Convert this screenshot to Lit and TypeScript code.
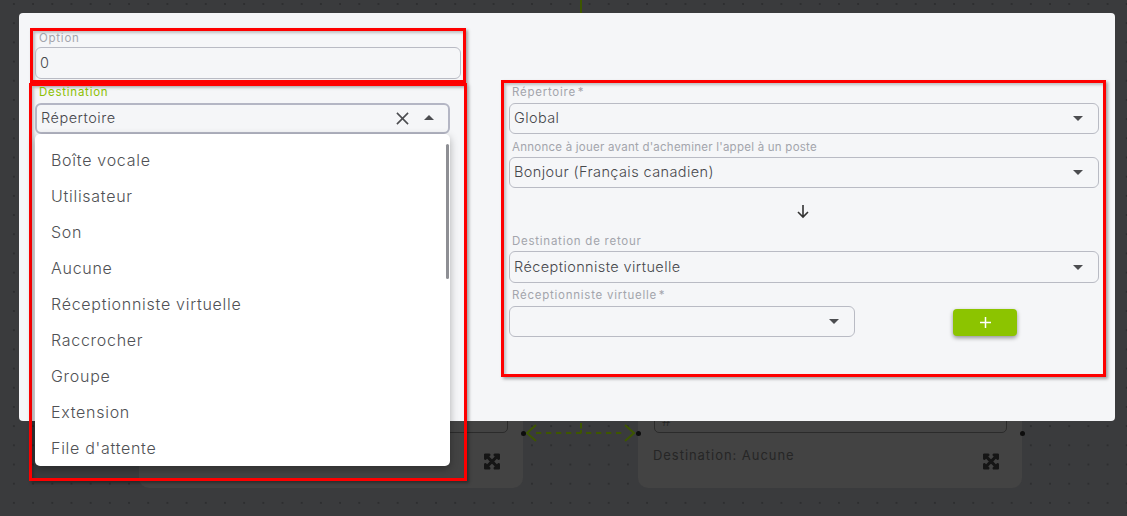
import { LitElement, html, css, svg } from 'lit';
import { customElement } from 'lit/decorators.js';

const expandPath =
  'M448 344v112a23.94 23.94 0 0 1-24 24H312c-21.39 0-32.09-25.9-17-41l36.2-36.2L224 295.6 116.77 402.9 153 439c15.09 15.1 4.39 41-17 41H24a23.94 23.94 0 0 1-24-24V344c0-21.4 25.89-32.1 41-17l36.19 36.2L184.46 256 77.18 148.7 41 185c-15.1 15.1-41 4.4-41-17V56a23.94 23.94 0 0 1 24-24h112c21.39 0 32.09 25.9 17 41l-36.2 36.2L224 216.4l107.23-107.3L295 73c-15.09-15.1-4.39-41 17-41h112a23.94 23.94 0 0 1 24 24v112c0 21.4-25.89 32.1-41 17l-36.19-36.2L263.54 256l107.28 107.3L407 327.1c15.1-15.2 41-4.5 41 16.9z';

const menuItems = [
  'Boîte vocale',
  'Utilisateur',
  'Son',
  'Aucune',
  'Réceptionniste virtuelle',
  'Raccrocher',
  'Groupe',
  'Extension',
  "File d'attente",
];

@customElement('app-root')
export class AppRoot extends LitElement {
  static styles = css`
    :host {
      display: block;
      position: relative;
      width: 1127px;
      height: 516px;
      overflow: hidden;
      font-family: Inter, 'Noto Sans', sans-serif;
      font-weight: 300;
      background-color: #3a3b3d;
      background-image: radial-gradient(circle at center, #1e1f20 0, #1e1f20 0.4px, transparent 0.9px);
      background-size: 19.2px 19.2px;
      background-position: 4.3px -5.6px;
    }

    .wires {
      position: absolute;
      inset: 0;
    }

    .node {
      position: absolute;
      top: 300px;
      width: 384px;
      height: 188px;
      background: #434343;
      border-radius: 10px;
    }
    .node.a { left: 139px; }
    .node.b { left: 638px; }

    .node-input {
      position: absolute;
      left: 16px;
      right: 15px;
      top: 60px;
      height: 73px;
      box-sizing: border-box;
      padding: 0 0 3px 7px;
      display: flex;
      align-items: flex-end;
      border: 1px solid #2b2b2b;
      border-radius: 5px;
      font-size: 14px;
      line-height: 16px;
      color: #262626;
    }

    .node-text {
      position: absolute;
      left: 15px;
      top: 147px;
      font-size: 13px;
      font-weight: 400;
      letter-spacing: 0.95px;
      color: #262626;
    }

    .node-icon {
      position: absolute;
      right: 23px;
      top: 153px;
      width: 16px;
      height: 17px;
      fill: #161616;
      stroke: #161616;
      stroke-width: 36;
    }

    .dot {
      position: absolute;
      width: 5px;
      height: 5px;
      border-radius: 50%;
      background: #0d0d0d;
    }

    .modal {
      position: absolute;
      left: 19px;
      top: 13px;
      width: 1096px;
      height: 408px;
      box-sizing: border-box;
      padding: 15px 0 0 11px;
      display: flex;
      align-items: flex-start;
      background: #f5f6f8;
      border-radius: 4px;
    }

    .left {
      display: flex;
      flex-direction: column;
      width: 436px;
    }

    .mark {
      box-sizing: border-box;
      border: 3px solid #fe0000;
      box-shadow: 2px 2px 3px rgba(0, 0, 0, 0.35), inset 2px 2px 3px rgba(0, 0, 0, 0.22);
    }

    .mark-option {
      height: 55px;
      padding-left: 2px;
    }

    .mark-destination {
      position: relative;
      width: 438px;
      height: 398px;
      margin-left: -1px;
      padding-left: 3px;
    }

    .mark-right {
      width: 605px;
      height: 297px;
      margin: 52px 0 0 35px;
      padding-left: 5px;
    }

    .label {
      display: block;
      margin-left: 3px;
      font-size: 11.5px;
      font-weight: 400;
      line-height: 16px;
      letter-spacing: 0.75px;
      color: #a3a5ac;
      white-space: nowrap;
    }
    .label.tight-12 { line-height: 14px; margin-left: 4px; padding-bottom: 2px; }
    .label.tight-10 { line-height: 12px; margin-left: 4px; padding-bottom: 5px; color: #8cc000; }
    .label.first { padding: 1px 0 3px; }
    .label.second { padding: 5px 0 2px; letter-spacing: 0.24px; }
    .label.third { padding-bottom: 2px; }
    .label.fourth { padding: 4px 0 3px; }

    .field {
      box-sizing: border-box;
      display: flex;
      align-items: center;
      width: 590px;
      height: 31px;
      padding: 0 15px 2px 4px;
      border: 1px solid #b9bbc4;
      border-radius: 6px;
      font-size: 14.5px;
      letter-spacing: 0.4px;
      color: #47484c;
    }
    .field.tall { height: 32px; }
    .field.short { width: 346px; }
    .field.option { width: 426px; height: 32px; }
    .field.open {
      width: 415px;
      height: 31px;
      border: 2px solid #b4b6c4;
      padding: 0 14px 2px 4px;
      letter-spacing: 0.5px;
    }

    .value { flex: 1; white-space: nowrap; }

    .caret {
      width: 0;
      height: 0;
      margin-top: 2px;
      border-left: 5.5px solid transparent;
      border-right: 5.5px solid transparent;
      border-top: 5.5px solid #4c4d50;
    }
    .caret.up {
      margin-top: 0;
      border-top: 0;
      border-bottom: 5.5px solid #4c4d50;
    }

    .clear {
      width: 13px;
      height: 13px;
      margin: 1px 15px 0 0;
      stroke: #4c4d50;
      stroke-width: 1.7;
      fill: none;
    }

    .menu {
      position: absolute;
      left: 3px;
      top: 48px;
      width: 415px;
      height: 332px;
      padding-top: 8px;
      box-sizing: border-box;
      overflow: hidden;
      background: #fff;
      border-radius: 5px;
      box-shadow: 0 3px 8px rgba(0, 0, 0, 0.3);
    }

    .item {
      height: 36px;
      line-height: 36px;
      padding-left: 16px;
      font-size: 16px;
      letter-spacing: 0.72px;
      color: #505155;
    }

    .scrollbar {
      position: absolute;
      right: 1px;
      top: 10px;
      width: 3px;
      height: 135px;
      background: #8e8f94;
      border-radius: 2px;
    }

    .down {
      display: flex;
      justify-content: center;
      align-items: center;
      width: 588px;
      height: 45px;
    }
    .down svg {
      width: 16px;
      height: 16px;
      stroke: #333;
      stroke-width: 1.6;
      fill: none;
    }

    .row {
      display: flex;
      align-items: flex-start;
    }

    .add {
      display: flex;
      align-items: center;
      justify-content: center;
      width: 64px;
      height: 27px;
      margin: 3px 0 0 98px;
      padding: 0;
      border: 0;
      border-radius: 4px;
      background: #8cc400;
      box-shadow: 0 2px 4px rgba(0, 0, 0, 0.4);
    }
    .add svg {
      width: 11px;
      height: 11px;
      stroke: #fff;
      stroke-width: 1.5;
    }
  `;

  private node(cls: string, text: string) {
    return html`
      <div class="node ${cls}">
        <div class="node-input">#</div>
        ${text ? html`<div class="node-text">${text}</div>` : ''}
        <svg class="node-icon" viewBox="0 0 448 512"><path d="${expandPath}"></path></svg>
      </div>
    `;
  }

  private caret(up = false) {
    return html`<span class="caret ${up ? 'up' : ''}"></span>`;
  }

  private select(value: string, cls = '') {
    return html`
      <div class="field ${cls}">
        <span class="value">${value}</span>
        ${this.caret()}
      </div>
    `;
  }

  render() {
    return html`
      ${this.node('a', '')}
      ${this.node('b', 'Destination: Aucune')}

      <svg class="wires" width="1127" height="516" fill="none" stroke="#3d5600" stroke-width="2">
        ${svg`
          <path d="M581 0V13"></path>
          <path d="M581 423V428.5M581 430V433"></path>
          <path d="M536 433H625" stroke-dasharray="5.3 4.7"></path>
          <path d="M536 425L527 433L536 441"></path>
          <path d="M625 425L634 433L625 441"></path>
        `}
      </svg>
      <span class="dot" style="left:521px;top:431px"></span>
      <span class="dot" style="left:636px;top:431px"></span>
      <span class="dot" style="left:1020px;top:431px"></span>

      <div class="modal">
        <div class="left">
          <div class="mark mark-option">
            <span class="label tight-12">Option</span>
            <div class="field option"><span class="value">0</span></div>
          </div>
          <div class="mark mark-destination">
            <span class="label tight-10">Destination</span>
            <div class="field open">
              <span class="value">Répertoire</span>
              <svg class="clear" viewBox="0 0 14 14"><path d="M1 1L13 13M13 1L1 13"></path></svg>
              ${this.caret(true)}
            </div>
            <div class="menu">
              ${menuItems.map((item) => html`<div class="item">${item}</div>`)}
              <div class="scrollbar"></div>
            </div>
          </div>
        </div>

        <div class="mark mark-right">
          <span class="label first">Répertoire&#8202;*</span>
          ${this.select('Global')}
          <span class="label second">Annonce à jouer avant d'acheminer l'appel à un poste</span>
          ${this.select('Bonjour (Français canadien)')}
          <div class="down">
            <svg viewBox="0 0 16 16"><path d="M8 2V14M3 9L8 14L13 9"></path></svg>
          </div>
          <span class="label third">Destination de retour</span>
          ${this.select('Réceptionniste virtuelle', 'tall')}
          <span class="label fourth">Réceptionniste virtuelle&#8202;*</span>
          <div class="row">
            ${this.select('', 'short')}
            <button class="add">
              <svg viewBox="0 0 11 11"><path d="M5.5 0V11M0 5.5H11"></path></svg>
            </button>
          </div>
        </div>
      </div>
    `;
  }
}
